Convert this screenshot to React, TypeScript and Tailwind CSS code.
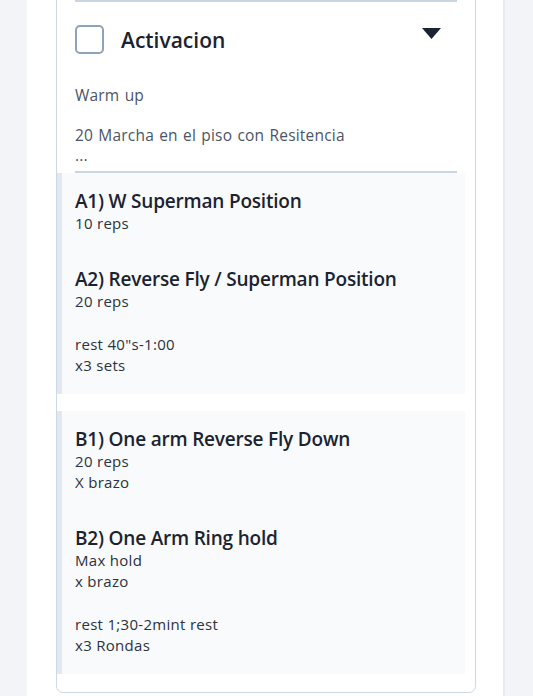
import React from "react";

const font = { fontFamily: "'Open Sans', 'Noto Sans', sans-serif" };

type Ex = { title: string; lines: string[] };

function Block({ items }: { items: Ex[] }) {
  return (
    <div className="mr-[10px] flex border-l-[5px] border-[#e3e8ef] bg-[#f9fafb] pl-[13px] pt-[16px] pb-[18px]">
      <div className="flex flex-col gap-[33px]">
        {items.map((it, i) => (
          <div key={i} className="flex flex-col">
            <div className="text-[19px] font-semibold leading-[24px] tracking-[-0.2px] text-[#1c2330]">{it.title}</div>
            {it.lines.map((l, j) => (
              <div
                key={j}
                className={
                  l === ""
                    ? "h-[22px]"
                    : "h-[21px] text-[15px] leading-[21px] tracking-[0.3px] text-[#2b3240]"
                }
              >
                {l}
              </div>
            ))}
          </div>
        ))}
      </div>
    </div>
  );
}

export default function App() {
  return (
    <div className="min-h-[696px] w-[533px] bg-[#f3f4f8]" style={font}>
      <div className="ml-[27px] w-[478px] h-[696px] overflow-hidden bg-white border-r-[2px] border-[#e8ebf0]">
        <div className="ml-[29px] w-[420px] -mt-[12px] rounded-b-[7px] border border-[#cdd8e4] bg-white pb-[18px]">
          <div className="mx-[18px] mt-[11px] border-t-[2px] border-[#cbd6e3]" />
          <div className="flex h-[50px] items-center pl-[18px] pr-[34px] mt-[12px]">
            <div className="h-[29px] w-[29px] rounded-[5px] border-[2px] border-[#8ea2b8]" />
            <div className="ml-[17px] mt-[4px] text-[21px] font-semibold text-[#1c2330]">Activacion</div>
            <div className="flex-1" />
            <svg width="19" height="11" viewBox="0 0 19 11" className="-mt-[11px]">
              <path d="M0 0 L19 0 L9.5 11 Z" fill="#1c2330" />
            </svg>
          </div>
          <div className="mx-[18px] mt-[21px] border-b-[2px] border-[#cbd6e3] pb-[6px] text-[15.5px] leading-[20px] tracking-[0.2px] [word-spacing:1px] text-[#4a5565]">
            <div>Warm up</div>
            <div className="h-[20px]" />
            <div>20 Marcha en el piso con Resitencia</div>
            <div>...</div>
          </div>
          <Block
            items={[
              { title: "A1) W Superman Position", lines: ["10 reps"] },
              { title: "A2) Reverse Fly / Superman Position", lines: ["20 reps", "", "rest 40\"s-1:00", "x3 sets"] },
            ]}
          />
          <div className="h-[17px]" />
          <Block
            items={[
              { title: "B1) One arm Reverse Fly Down", lines: ["20 reps", "X brazo"] },
              { title: "B2) One Arm Ring hold", lines: ["Max hold", "x brazo", "", "rest 1;30-2mint rest", "x3 Rondas"] },
            ]}
          />
        </div>
      </div>
    </div>
  );
}
